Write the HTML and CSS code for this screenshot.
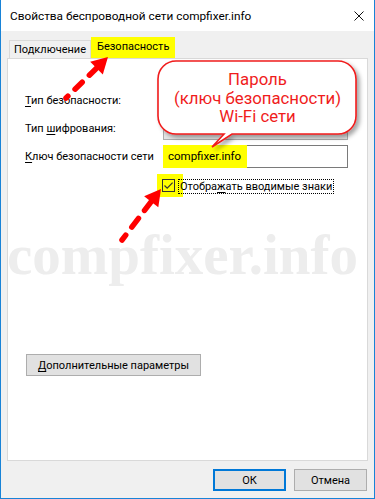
FILE: index.html
```html
<!DOCTYPE html>
<html lang="ru">
<head>
<meta charset="utf-8">
<title>Свойства беспроводной сети</title>
<link rel="stylesheet" href="styles.css">
</head>
<body>
<div class="window">
  <div class="titlebar">
    <span class="title">Свойства беспроводной сети compfixer.info</span>
    <svg class="close" width="10" height="10" viewBox="0 0 10 10"><path d="M0.5 0.5 L9.5 9.5 M9.5 0.5 L0.5 9.5" stroke="#111" stroke-width="1" fill="none"/></svg>
  </div>
  <div class="content">
    <div class="tabs">
      <div class="tab">Подключение</div>
      <div class="tab active">Безопасность</div>
    </div>
    <div class="panel">
      <div class="watermark">compfixer.info</div>
      <div class="form">
        <div class="lbl"><u>Т</u>ип безопасности:</div>
        <div class="combo"></div>
        <div class="lbl">Тип <u>ш</u>ифрования:</div>
        <div class="combo"></div>
        <div class="lbl"><u>К</u>люч безопасности сети</div>
        <div class="input"><span class="hl">compfixer.info</span></div>
        <div class="check-row">
          <span class="check-hl"><span class="box"><svg width="11" height="11" viewBox="0 0 11 11"><path d="M1.5 5.5 L4.2 8.2 L9.6 2.6" stroke="#333" stroke-width="1.2" fill="none"/></svg></span></span>
          <span class="check-label">Отобра<u>ж</u>ать вводимые знаки</span>
        </div>
      </div>
      <button class="btn adv"><u>Д</u>ополнительные параметры</button>
    </div>
    <div class="footer">
      <button class="btn ok">ОК</button>
      <button class="btn cancel">Отмена</button>
    </div>
  </div>
  <svg class="overlay" width="375" height="499" viewBox="0 0 375 499">
    <defs>
      <filter id="sh" x="-10%" y="-10%" width="130%" height="140%">
        <feDropShadow dx="3" dy="3" stdDeviation="2" flood-color="#000" flood-opacity="0.35"/>
      </filter>
    </defs>
    <path d="M176 61 H338 A18 18 0 0 1 356 79 V116 A18 18 0 0 1 338 134 H232 L212 147 L224 134 H176 A18 18 0 0 1 158 116 V79 A18 18 0 0 1 176 61 Z" fill="#fff" stroke="#f01c1c" stroke-width="1.6" filter="url(#sh)"/>
    <g stroke="#ff0000" stroke-width="5.5" stroke-linecap="round" fill="none">
      <path d="M96.5 68.2 L66 98" stroke-dasharray="10 10"/>
      <path d="M151.2 201.7 L122 240" stroke-dasharray="11 10"/>
    </g>
    <g fill="#ff0000">
      <polygon points="108,57 90.2,61.8 102.8,74.6"/>
      <polygon points="161,189 144.1,196.2 158.3,207.2"/>
    </g>
  </svg>
  <div class="callout-text">Пароль<br>(ключ безопасности)<br>Wi-Fi сети</div>
</div>
</body>
</html>
```

FILE: styles.css
```css
* { box-sizing: border-box; }
html, body { margin: 0; padding: 0; }
body {
  width: 375px;
  height: 499px;
  overflow: hidden;
  font-family: Roboto, "Noto Sans", sans-serif;
  font-size: 12px;
  color: #000;
  background: #fff;
}
u { text-decoration: underline; text-underline-offset: 2px; }

.window {
  position: relative;
  width: 375px;
  height: 499px;
  background: #f0f0f0;
  border: 1px solid #1883d7;
  border-top: none;
  display: flex;
  flex-direction: column;
}

.titlebar {
  height: 31px;
  flex: none;
  background: #fff;
  display: flex;
  align-items: center;
  justify-content: space-between;
  padding: 0 10px 0 9px;
}
.title { line-height: 16px; font-size: 11.8px; }
.close { display: block; }

.content {
  flex: 1;
  display: flex;
  flex-direction: column;
  padding: 6px 6px 0 6px;
  font-size: 11px;
}

.tabs {
  height: 21px;
  display: flex;
  align-items: flex-end;
  padding-left: 2px;
}
.tab {
  height: 18px;
  width: 82px;
  border: 1px solid #d9d9d9;
  border-bottom: none;
  padding-left: 4px;
  line-height: 17px;
  background: #f0f0f0;
  white-space: nowrap;
}
.tab.active {
  height: 21px;
  width: 84px;
  border: none;
  padding-left: 6px;
  line-height: 20px;
  background: #ffff00;
}

.panel {
  position: relative;
  height: 403px;
  flex: none;
  background: #fff;
  border: 1px solid #d9d9d9;
  padding: 30px 0 0 17px;
}

.watermark {
  position: absolute;
  left: -1px;
  top: 164px;
  font-family: "Liberation Serif", serif;
  font-weight: bold;
  font-size: 57px;
  line-height: 64px;
  color: #ededed;
  white-space: nowrap;
}

.form {
  position: relative;
  display: grid;
  grid-template-columns: 138px 185px;
  row-gap: 5px;
}
.lbl {
  height: 23px;
  line-height: 23px;
  white-space: nowrap;
}
.combo {
  height: 23px;
  background: #e5e5e5;
  border: 1px solid #adadad;
}
.input {
  height: 23px;
  border: 1px solid #7a7a7a;
  background: #fff;
  display: flex;
}
.input .hl {
  width: 84px;
  margin: -1px 0 -1px -1px;
  padding-left: 5px;
  background: #ffff00;
  line-height: 23px;
  font-size: 11.5px;
}

.check-row {
  grid-column: 2;
  display: flex;
  align-items: flex-start;
  margin-top: 6px;
  height: 15px;
}
.check-hl {
  display: flex;
  background: #ffff00;
  padding: 5px 8px 5px 5px;
  margin: -5px -8px -5px -6px;
}
.box {
  width: 13px;
  height: 13px;
  border: 1px solid #333;
  display: block;
}
.box svg { display: block; }
.check-label {
  margin-left: 3px;
  height: 15px;
  line-height: 13px;
  padding: 0 1px;
  border: 1px dotted #000;
  white-space: nowrap;
}

.btn {
  font: inherit;
  color: #000;
  background: #e1e1e1;
  border: 1px solid #adadad;
  height: 22px;
  padding: 0;
  white-space: nowrap;
}
.adv {
  position: relative;
  display: block;
  width: 175px;
  margin: 160px 0 0 1px;
}

.footer {
  display: flex;
  justify-content: flex-end;
  gap: 8px;
  padding: 8px 1px 0 0;
}
.ok, .cancel { width: 73px; }
.ok { border: 2px solid #0078d7; }

.overlay {
  position: absolute;
  left: -1px;
  top: 0;
  pointer-events: none;
}
.callout-text {
  position: absolute;
  left: 157px;
  top: 70px;
  width: 199px;
  text-align: center;
  font-size: 16.8px;
  line-height: 18.5px;
  color: #f01c1c;
  white-space: nowrap;
}
```
